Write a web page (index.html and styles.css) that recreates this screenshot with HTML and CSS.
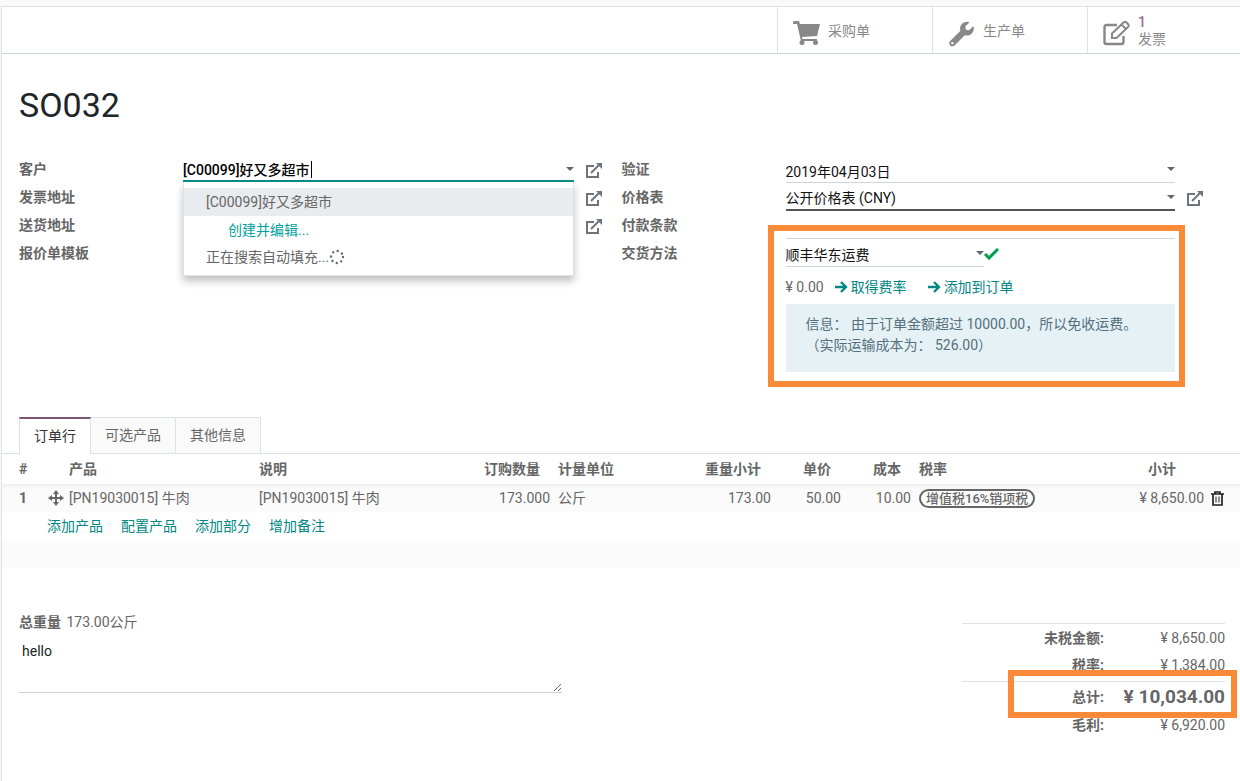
FILE: index.html
```html
<!DOCTYPE html>
<html lang="zh-CN">

<head>
  <meta charset="UTF-8">
  <meta name="viewport" content="width=device-width, initial-scale=1.0">
  <title>SO032</title>
  <link rel="stylesheet" href="styles.css">
</head>

<body>

  <!-- icons -->
  <svg class="sprite" aria-hidden="true">
    <symbol id="icon-external" viewBox="0 0 18 18">
      <path d="M9 4H2v11h11V10" fill="none" stroke="currentColor" stroke-width="2" />
      <path d="M6 11l8-8" fill="none" stroke="currentColor" stroke-width="2" />
      <path d="M11 1h6v6z" fill="currentColor" />
    </symbol>
    <symbol id="icon-arrow" viewBox="0 0 14 14">
      <path d="M1 7h11M7 2l5 5-5 5" fill="none" stroke="currentColor" stroke-width="2.4" />
    </symbol>
  </svg>

  <main class="sheet">
    <div class="button-box">
      <button class="stat-button" type="button">
        <svg class="stat-icon" viewBox="0 0 28 28">
          <path d="M2 2h5l1 3h20l-3 12-15 1 .5 2H25v2H9L5 5H1V3z" fill="currentColor" />
          <circle cx="10" cy="23.5" r="2.5" fill="currentColor" />
          <circle cx="23.5" cy="23.5" r="2.5" fill="currentColor" />
        </svg>
        <span>采购单</span>
      </button>
      <button class="stat-button" type="button">
        <svg class="stat-icon" viewBox="-48 -58 584 584">
          <path fill="currentColor" d="M507.73 109.1c-2.24-9.03-13.54-12.09-20.12-5.51l-74.36 74.36-67.88-11.31-11.31-67.88 74.36-74.36c6.62-6.62 3.43-17.9-5.66-20.16-47.38-11.74-99.55.91-136.58 37.93-39.64 39.64-50.55 97.1-34.05 147.2L18.74 402.76c-24.99 24.99-24.99 65.51 0 90.5 24.99 24.99 65.51 24.99 90.5 0l213.21-213.21c50.12 16.71 107.47 5.68 147.37-34.22 37.07-37.07 49.7-89.32 37.91-136.73zM64 472c-13.25 0-24-10.75-24-24 0-13.26 10.75-24 24-24s24 10.74 24 24c0 13.25-10.75 24-24 24z" />
        </svg>
        <span>生产单</span>
      </button>
      <button class="stat-button" type="button">
        <svg class="stat-icon" viewBox="0 0 28 28">
          <path d="M15 6H4.500q-2 0-2 2v15q0 2 2 2h15q2 0 2-2v-6" fill="none" stroke="currentColor" stroke-width="2.4" />
          <path d="M10 19v-4.500L21.500 3.500q1.500-1.500 3 0l1.500 1.500q1.500 1.500 0 3L14.500 19zM19.500 5.500l4.500 4.500" fill="none" stroke="currentColor" stroke-width="2" />
        </svg>
        <span><strong class="stat-value">1</strong>发票</span>
      </button>
    </div>

    <h1 class="title">SO032</h1>

    <div class="groups">
      <div class="group">
        <div class="row">
          <label class="label" for="partner">客户</label>
          <div class="field">
            <input class="input input-active" id="partner" type="text" value="[C00099]好又多超市">
            <span class="cursor"></span>
            <span class="caret"></span>
            <ul class="dropdown">
              <li class="dropdown-item selected">[C00099]好又多超市</li>
              <li class="dropdown-item create">创建并编辑...</li>
              <li class="dropdown-item">正在搜索自动填充...<svg class="spinner" viewBox="0 0 16 16">
                  <circle cx="8" cy="8" r="6" fill="none" stroke="currentColor" stroke-width="2.400" stroke-linecap="round" stroke-dasharray="0 4.712" />
                </svg></li>
            </ul>
          </div>
          <button class="external" type="button" aria-label="外部链接"><svg><use href="#icon-external" /></svg></button>
        </div>
        <div class="row">
          <span class="label">发票地址</span>
          <div class="field"></div>
          <button class="external" type="button" aria-label="外部链接"><svg><use href="#icon-external" /></svg></button>
        </div>
        <div class="row">
          <span class="label">送货地址</span>
          <div class="field"></div>
          <button class="external" type="button" aria-label="外部链接"><svg><use href="#icon-external" /></svg></button>
        </div>
        <div class="row">
          <span class="label">报价单模板</span>
        </div>
      </div>

      <div class="group group-right">
        <div class="row">
          <label class="label" for="validity">验证</label>
          <div class="field">
            <input class="input" id="validity" type="text" value="2019年04月03日">
            <span class="caret"></span>
          </div>
        </div>
        <div class="row">
          <label class="label" for="pricelist">价格表</label>
          <div class="field">
            <select class="input input-required" id="pricelist">
              <option>公开价格表 (CNY)</option>
            </select>
            <span class="caret"></span>
          </div>
          <button class="external" type="button" aria-label="外部链接"><svg><use href="#icon-external" /></svg></button>
        </div>
        <div class="row">
          <label class="label" for="payment">付款条款</label>
          <div class="field">
            <select class="input" id="payment">
              <option></option>
            </select>
          </div>
        </div>
        <div class="row row-delivery">
          <label class="label" for="carrier">交货方法</label>
          <div class="delivery">
            <div class="carrier">
              <div class="field carrier-field">
                <select class="input" id="carrier">
                  <option>顺丰华东运费</option>
                </select>
                <span class="caret"></span>
              </div>
              <svg class="check" viewBox="0 0 15 12">
                <path d="M1 6l4 4 9-9" fill="none" stroke="currentColor" stroke-width="3" />
              </svg>
            </div>
            <div class="rate">
              <span>¥ 0.00</span>
              <button class="link" type="button"><svg><use href="#icon-arrow" /></svg>取得费率</button>
              <button class="link" type="button"><svg><use href="#icon-arrow" /></svg>添加到订单</button>
            </div>
            <div class="alert">信息： 由于订单金额超过 10000.00，所以免收运费。<br>（实际运输成本为： 526.00）</div>
            <div class="highlight highlight-delivery"></div>
          </div>
        </div>
      </div>
    </div>

    <div class="tabs">
      <button class="tab active" type="button">订单行</button>
      <button class="tab" type="button">可选产品</button>
      <button class="tab" type="button">其他信息</button>
    </div>

    <table class="lines">
      <colgroup>
        <col class="col-index">
        <col class="col-handle">
        <col class="col-product">
        <col class="col-name">
        <col class="col-qty">
        <col class="col-uom">
        <col class="col-weight">
        <col class="col-price">
        <col class="col-price">
        <col>
        <col class="col-subtotal">
        <col class="col-delete">
      </colgroup>
      <thead>
        <tr>
          <th class="index">#</th>
          <th></th>
          <th>产品</th>
          <th>说明</th>
          <th class="number">订购数量</th>
          <th>计量单位</th>
          <th class="number">重量小计</th>
          <th class="number">单价</th>
          <th class="number">成本</th>
          <th>税率</th>
          <th class="number subtotal">小计</th>
          <th></th>
        </tr>
      </thead>
      <tbody>
        <tr>
          <th class="index">1</th>
          <td class="icon-cell"><svg class="move" viewBox="0 0 16 16">
              <path d="M8 2v12M2 8h12" stroke="currentColor" stroke-width="2" />
              <path d="M8 0l3 4H5zM8 16l3-4H5zM0 8l4-3v6zM16 8l-4-3v6z" fill="currentColor" />
            </svg></td>
          <td>[PN19030015] 牛肉</td>
          <td>[PN19030015] 牛肉</td>
          <td class="number">173.000</td>
          <td>公斤</td>
          <td class="number">173.00</td>
          <td class="number">50.00</td>
          <td class="number">10.00</td>
          <td><span class="badge">增值税16%销项税</span></td>
          <td class="number">¥ 8,650.00</td>
          <td class="icon-cell"><button class="delete" type="button" aria-label="删除"><svg viewBox="0 0 13 15">
                <path d="M0 3h13M4 2.500V1h5v1.500M2 3v11h9V3" fill="none" stroke="currentColor" stroke-width="1.700" />
                <path d="M5 5.500v6M8 5.500v6" stroke="currentColor" />
              </svg></button></td>
        </tr>
        <tr>
          <td></td>
          <td class="add-cell" colspan="11">
            <div class="add-links">
              <button class="link" type="button">添加产品</button>
              <button class="link" type="button">配置产品</button>
              <button class="link" type="button">添加部分</button>
              <button class="link" type="button">增加备注</button>
            </div>
          </td>
        </tr>
        <tr>
          <td colspan="12"></td>
        </tr>
      </tbody>
    </table>

    <div class="footer">
      <div class="notes">
        <div class="weight"><label for="note">总重量</label> 173.00公斤</div>
        <textarea class="note" id="note">hello</textarea>
      </div>
      <dl class="totals">
        <div class="total-row"><dt>未税金额:</dt><dd>¥ 8,650.00</dd></div>
        <div class="total-row"><dt>税率:</dt><dd>¥ 1,384.00</dd></div>
        <div class="total-row grand"><dt>总计:</dt><dd>¥ 10,034.00</dd><div class="highlight highlight-total"></div></div>
        <div class="total-row"><dt>毛利:</dt><dd>¥ 6,920.00</dd></div>
      </dl>
    </div>
  </main>

</body>

</html>
```
FILE: styles.css
```css
* {
  box-sizing: border-box;
}

body {
  margin: 0;
  padding: 6px 0 0 1px;
  background-color: #f9f9f9;
  color: #666;
  font-family: Roboto, "Noto Sans CJK SC", sans-serif;
  font-size: 14px;
  line-height: 20px;
}

button,
input,
select,
textarea {
  margin: 0;
  padding: 0;
  border: none;
  border-radius: 0;
  background: none;
  color: inherit;
  font: inherit;
}

button {
  cursor: pointer;
}

.sprite {
  position: absolute;
  width: 0;
  height: 0;
}

.sheet {
  min-height: calc(100vh - 6px);
  border-top: 1px solid #dee2e6;
  border-left: 1px solid #dee2e6;
  background-color: white;
}

/* stat buttons */
.button-box {
  display: flex;
  justify-content: flex-end;
  height: 47px;
  border-bottom: 1px solid #ced4da;
}

.stat-button {
  display: flex;
  align-items: center;
  gap: 8px;
  width: 155px;
  padding: 2px 14px 0;
  border-left: 1px solid #dee2e6;
  color: #888;
  line-height: 17px;
  text-align: left;
}

.stat-button:last-child {
  width: 153px;
}

.stat-icon {
  width: 28px;
  height: 28px;
  margin-top: 4px;
}

.stat-value {
  display: block;
  color: #9b6a92;
  font-weight: 500;
}

.title {
  margin: 0;
  padding: 31px 17px 0;
  color: #212529;
  font-size: 34px;
  font-weight: 400;
  line-height: 40px;
}

/* form */
.groups {
  display: grid;
  grid-template-columns: 1fr 1fr;
  padding: 30px 16px 0 17px;
}

.row {
  display: flex;
  min-height: 28px;
}

.group-right {
  padding-right: 1px;
}

.label {
  flex: 0 0 164px;
  padding-top: 4px;
  font-weight: 700;
}

.field {
  position: relative;
  flex: 1;
  margin-right: 48px;
}

.row .field:has(+ .external) {
  margin-right: 11px;
}

.input {
  display: block;
  width: 100%;
  height: 28px;
  padding-top: 4px;
  border-bottom: 1px solid #ced4da;
  color: #111;
  appearance: none;
  outline: none;
}

.input-required {
  border-bottom: 2px solid #555;
}

.input-active {
  height: 27px;
  padding-top: 2px;
  border-bottom: 2px solid #008f8c;
  color: #000;
  font-weight: 500;
}

.caret {
  position: absolute;
  top: 12px;
  right: 0;
  border: 4px solid transparent;
  border-top-color: #666;
  border-bottom: none;
}

.cursor {
  position: absolute;
  top: 6px;
  left: 128px;
  width: 1px;
  height: 17px;
  background-color: black;
}

.external {
  flex: 0 0 18px;
  height: 18px;
  margin: 7px 19px 0 0;
  color: #6c757d;
}

.external svg {
  display: block;
  width: 18px;
  height: 18px;
}

.dropdown {
  position: absolute;
  z-index: 2;
  top: 27px;
  left: 0;
  width: 100%;
  margin: 0;
  padding: 6px 0 5px;
  border: 1px solid #dee2e6;
  border-top: none;
  background-color: white;
  box-shadow: 0 5px 8px rgba(0, 0, 0, 0.25);
  list-style: none;
}

.dropdown-item {
  display: flex;
  align-items: center;
  height: 27px;
  padding-left: 22px;
}

.selected {
  height: 28px;
  background-color: #e9ecef;
}

.create {
  padding-left: 44px;
  color: #00a09d;
}

.spinner {
  width: 16px;
  height: 16px;
}

/* delivery */
.row-delivery {
  min-height: 149px;
}

.delivery {
  position: relative;
  flex: 1;
  margin-right: 48px;
}

.carrier {
  display: flex;
  align-items: center;
}

.carrier .carrier-field {
  flex: 0 0 198px;
  margin: 0;
}

.check {
  width: 15px;
  height: 12px;
  margin-top: 2px;
  color: #00a04a;
}

.rate {
  display: flex;
  align-items: center;
  gap: 20px;
  padding: 10px 0 7px;
}

.rate span {
  margin-right: -10px;
}

.link {
  display: flex;
  align-items: center;
  gap: 3px;
  color: #008784;
}

.link svg {
  width: 14px;
  height: 14px;
}

.alert {
  min-height: 68px;
  padding: 10px 20px;
  background-color: #e6f1f6;
  color: #53707c;
  line-height: 21px;
}

.highlight {
  position: absolute;
  border: 6px solid #fa8a38;
  pointer-events: none;
}

.highlight-delivery {
  inset: -14px -10px 1px -18px;
}

/* tabs */
.tabs {
  display: flex;
  height: 37px;
  margin-top: 29px;
  padding-left: 17px;
  border-bottom: 1px solid #dee2e6;
}

.tab {
  height: 36px;
  padding: 0 14px 2px;
  border: 1px solid #dee2e6;
  border-left: none;
  border-bottom: none;
  background-color: #fafafa;
}

.active {
  height: 37px;
  border-top: 2px solid #7c5576;
  border-left: 1px solid #dee2e6;
  background-color: white;
  color: #333;
}

/* order lines */
.lines {
  width: 100%;
  border-collapse: collapse;
  table-layout: fixed;
}

.col-index { width: 43px; }
.col-handle { width: 20px; }
.col-product { width: 190px; }
.col-name { width: 219px; }
.col-qty { width: 80px; }
.col-uom { width: 125px; }
.col-weight { width: 96px; }
.col-price { width: 70px; }
.col-subtotal { width: 120px; }
.col-delete { width: 32px; }

.lines th,
.lines td {
  height: 28px;
  padding: 0 4px;
  text-align: left;
  white-space: nowrap;
}

.lines thead th {
  height: 30px;
}

.lines .index {
  padding-left: 17px;
}

.lines .number {
  text-align: right;
}

.lines thead .number {
  padding-right: 14px;
}

.lines thead .subtotal {
  padding-right: 32px;
}

.lines tbody tr:nth-child(odd) {
  background-color: #fbfbfb;
}

.lines tbody tr:first-child {
  background-image: linear-gradient(#eee, #fbfbfb 5px);
}

.lines .icon-cell {
  padding: 0 3px;
}

.lines .add-cell {
  padding-left: 2px;
}

.move {
  display: block;
  width: 16px;
  height: 16px;
}

.delete {
  display: block;
  color: #222;
}

.delete svg {
  display: block;
  width: 13px;
  height: 15px;
}

.badge {
  display: inline-block;
  padding: 0 5px;
  border: 2px solid #666;
  border-radius: 10px;
  font-size: 13px;
  font-weight: 500;
  line-height: 15px;
}

.add-links {
  display: flex;
  gap: 18px;
}

/* notes and totals */
.footer {
  display: flex;
  justify-content: space-between;
  align-items: flex-start;
  padding: 44px 15px 0 17px;
}

.notes {
  width: 45%;
}

.weight label {
  margin-right: 2px;
  font-weight: 700;
}

.note {
  display: block;
  width: 100%;
  height: 53px;
  margin-top: 8px;
  padding: 1px 3px;
  border-bottom: 1px solid #ced4da;
  color: #222;
  resize: both;
}

.totals {
  width: 263px;
  margin: 11px 0 0;
  border-top: 1px solid #dee2e6;
}

.total-row {
  display: flex;
  align-items: center;
  height: 27px;
}

.total-row dt {
  flex: 0 0 142px;
  font-weight: 700;
  text-align: right;
}

.total-row dd {
  flex: 1;
  margin: 0;
  text-align: right;
}

.grand {
  position: relative;
  height: 30px;
  margin-top: 3px;
  border-top: 1px solid #dee2e6;
}

.grand dd {
  font-size: 19px;
  font-weight: 700;
}

.highlight-total {
  inset: -12px -12px -7px 46px;
}
```
